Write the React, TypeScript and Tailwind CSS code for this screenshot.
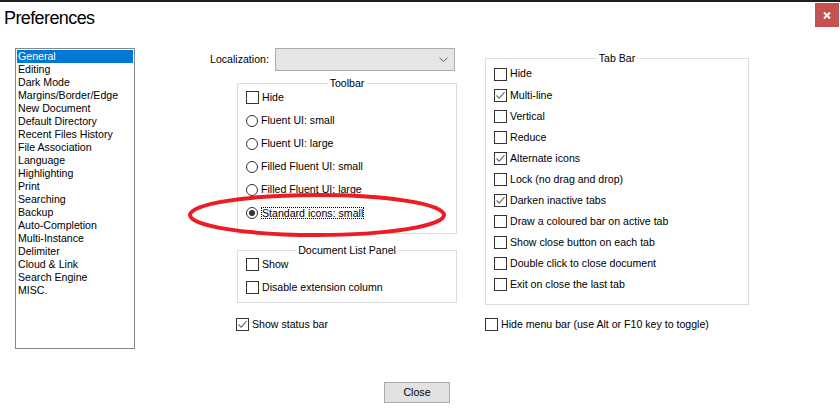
import type { ReactNode } from 'react';

const categories = [
  'General',
  'Editing',
  'Dark Mode',
  'Margins/Border/Edge',
  'New Document',
  'Default Directory',
  'Recent Files History',
  'File Association',
  'Language',
  'Highlighting',
  'Print',
  'Searching',
  'Backup',
  'Auto-Completion',
  'Multi-Instance',
  'Delimiter',
  'Cloud & Link',
  'Search Engine',
  'MISC.',
];

const tabBarOptions = [
  { label: 'Hide', checked: false },
  { label: 'Multi-line', checked: true },
  { label: 'Vertical', checked: false },
  { label: 'Reduce', checked: false },
  { label: 'Alternate icons', checked: true },
  { label: 'Lock (no drag and drop)', checked: false },
  { label: 'Darken inactive tabs', checked: true },
  { label: 'Draw a coloured bar on active tab', checked: false },
  { label: 'Show close button on each tab', checked: false },
  { label: 'Double click to close document', checked: false },
  { label: 'Exit on close the last tab', checked: false },
];

const toolbarRadios = [
  'Fluent UI: small',
  'Fluent UI: large',
  'Filled Fluent UI: small',
  'Filled Fluent UI: large',
];

function CheckBox({ checked = false }: { checked?: boolean }) {
  return (
    <span className="w-[13px] h-[13px] border border-[#333333] bg-white flex items-center justify-center shrink-0">
      {checked && (
        <svg width="11" height="11" viewBox="0 0 11 11">
          <path d="M1.5 5.5 L4.2 8.2 L9.5 2.2" stroke="#6a6a6a" strokeWidth="1.1" fill="none" />
        </svg>
      )}
    </span>
  );
}

function Radio({ checked = false }: { checked?: boolean }) {
  return (
    <span className="w-[12px] h-[12px] rounded-full border border-[#333333] bg-white flex items-center justify-center shrink-0">
      {checked && <span className="w-[6px] h-[6px] rounded-full bg-[#333333]" />}
    </span>
  );
}

function Group({ title, className, children }: { title: string; className: string; children: ReactNode }) {
  return (
    <div className={`relative border border-[#dcdcdc] ${className}`}>
      <span className="absolute left-1/2 -translate-x-1/2 -top-[7px] bg-white px-[2px] leading-[13px] whitespace-nowrap">
        {title}
      </span>
      {children}
    </div>
  );
}

export default function App() {
  return (
    <div
      className="relative w-[840px] h-[413px] bg-white overflow-hidden text-black text-[10.6px]"
      style={{ fontFamily: '"Liberation Sans", Arial, sans-serif' }}
    >
      <div className="h-[2px] bg-[#1f1f1f]" />

      {/* Title bar */}
      <div className="h-[46px] flex justify-between items-start">
        <span className="pl-[4px] pt-[4px] text-[18px] leading-[24px] tracking-[-0.6px]">Preferences</span>
        <div className="mt-[1px] mr-[1px] w-[24px] h-[24px] bg-[#c75050] flex items-center justify-center">
          <svg width="8" height="7" viewBox="0 0 8 7">
            <path d="M1 0.5 L7 6.5 M7 0.5 L1 6.5" stroke="white" strokeWidth="2" />
          </svg>
        </div>
      </div>

      {/* Body */}
      <div className="flex pl-[15px]">
        {/* Category list */}
        <div className="w-[120px] h-[301px] border border-[#828790] p-[1px]">
          {categories.map((c, i) => (
            <div
              key={c}
              className={`h-[13px] leading-[13px] pl-[1px] whitespace-nowrap ${i === 0 ? 'bg-[#0078d7] text-white' : ''}`}
            >
              {c}
            </div>
          ))}
        </div>

        {/* Middle column */}
        <div className="ml-[75px] w-[247px]">
          <div className="flex items-center h-[23px]">
            <span className="w-[65px]">Localization:</span>
            <div className="w-[180px] h-[23px] bg-[#e5e5e5] border border-[#acacac] flex items-center justify-end pr-[6px]">
              <svg width="9" height="5" viewBox="0 0 9 5">
                <path d="M0.5 0.5 L4.5 4.5 L8.5 0.5" stroke="#606060" fill="none" strokeWidth="1" />
              </svg>
            </div>
          </div>

          <Group title="Toolbar" className="mt-[12px] ml-[27px] w-[220px] pt-[2px] pb-[9px] pl-[8px]">
            <div className="flex items-center h-[23px] gap-[3px]">
              <CheckBox />
              <span>Hide</span>
            </div>
            {toolbarRadios.map((r) => (
              <div key={r} className="flex items-center h-[23px] gap-[3px]">
                <Radio />
                <span>{r}</span>
              </div>
            ))}
            <div className="flex items-center h-[23px] gap-[3px]">
              <Radio checked />
              <span className="border border-dotted border-black leading-[10px] h-[12px]">Standard icons: small</span>
            </div>
          </Group>

          <Group title="Document List Panel" className="mt-[16px] ml-[27px] w-[220px] pt-[2px] pb-[3px] pl-[8px]">
            <div className="flex items-center h-[23px] gap-[3px]">
              <CheckBox />
              <span>Show</span>
            </div>
            <div className="flex items-center h-[23px] gap-[3px]">
              <CheckBox />
              <span>Disable extension column</span>
            </div>
          </Group>

          <div className="flex items-center h-[23px] gap-[3px] mt-[10px] ml-[26px]">
            <CheckBox checked />
            <span>Show status bar</span>
          </div>
        </div>

        {/* Right column */}
        <div className="ml-[28px] w-[264px]">
          <Group title="Tab Bar" className="mt-[10px] w-[264px] pt-[4px] pb-[9px] pl-[8px]">
            {tabBarOptions.map((o, i) => (
              <div key={o.label} className={`flex items-center gap-[3px] ${i === 0 ? 'h-[22px]' : 'h-[21px]'}`}>
                <CheckBox checked={o.checked} />
                <span className="whitespace-nowrap">{o.label}</span>
              </div>
            ))}
          </Group>

          <div className="flex items-center h-[23px] gap-[3px] mt-[8px]">
            <CheckBox />
            <span className="whitespace-nowrap">Hide menu bar (use Alt or F10 key to toggle)</span>
          </div>
        </div>
      </div>

      {/* Footer */}
      <div className="mt-[33px] pl-[384px]">
        <button className="w-[66px] h-[21px] bg-[#e1e1e1] border border-[#adadad] leading-[19px] text-center">
          Close
        </button>
      </div>

      {/* Red annotation */}
      <svg className="absolute inset-0 pointer-events-none" width="840" height="413">
        <ellipse cx="317" cy="215" rx="127" ry="20" fill="none" stroke="#ed1c24" strokeWidth="4" />
      </svg>
    </div>
  );
}
